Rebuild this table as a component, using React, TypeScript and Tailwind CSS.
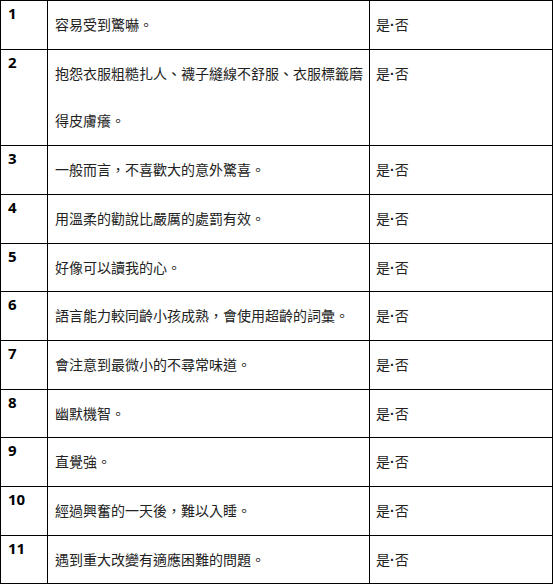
const rows: { no: string; text: string }[] = [
  { no: '1', text: '容易受到驚嚇。' },
  { no: '2', text: '抱怨衣服粗糙扎人、襪子縫線不舒服、衣服標籤磨得皮膚癢。' },
  { no: '3', text: '一般而言，不喜歡大的意外驚喜。' },
  { no: '4', text: '用溫柔的勸說比嚴厲的處罰有效。' },
  { no: '5', text: '好像可以讀我的心。' },
  { no: '6', text: '語言能力較同齡小孩成熟，會使用超齡的詞彙。' },
  { no: '7', text: '會注意到最微小的不尋常味道。' },
  { no: '8', text: '幽默機智。' },
  { no: '9', text: '直覺強。' },
  { no: '10', text: '經過興奮的一天後，難以入睡。' },
  { no: '11', text: '遇到重大改變有適應困難的問題。' },
];

function App() {
  return (
    <div lang="zh-TW" className="w-[553px] bg-white">
      <table className="w-[553px] table-fixed border-collapse border border-black">
        <colgroup>
          <col className="w-[47px]" />
          <col className="w-[322px]" />
          <col />
        </colgroup>
        <tbody>
          {rows.map((row) => (
            <tr key={row.no}>
              {/* number */}
              <td className="border border-black align-top px-[7px] pt-[2px] font-['Open_Sans',sans-serif] text-[15px] font-bold text-black leading-[20px]">
                {row.no}
              </td>
              <td className="border border-black align-top pl-[7px] pr-0 font-['Noto_Sans_CJK_TC',sans-serif] text-[14px] leading-[47.7px] text-[#222]">
                {row.text}
              </td>
              <td className="border border-black align-top px-[6px] font-['Noto_Sans_CJK_TC',sans-serif] text-[14px] leading-[47.7px] text-[#222]">
                是<span className="font-['Liberation_Sans',sans-serif] text-[14px] font-bold leading-none">·</span>否
              </td>
            </tr>
          ))}
        </tbody>
      </table>
    </div>
  );
}

export default App;
